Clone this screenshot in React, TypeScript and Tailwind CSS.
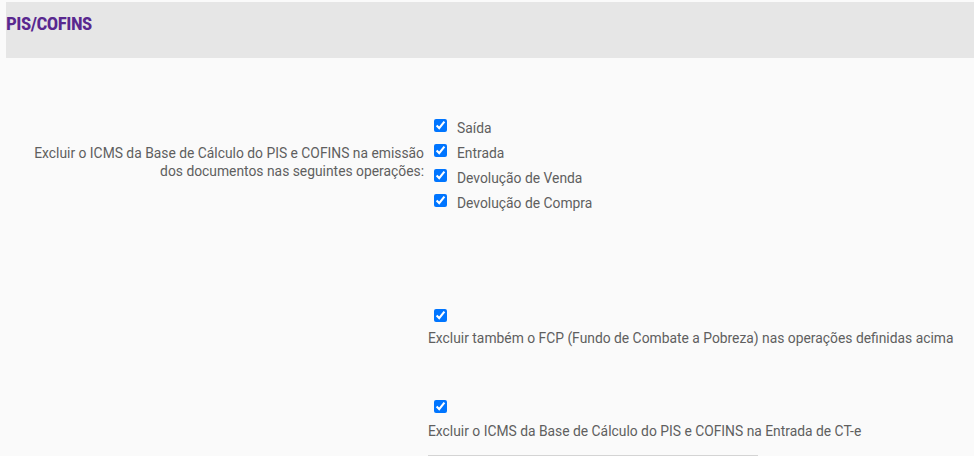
const ops = ["Saída", "Entrada", "Devolução de Venda", "Devolução de Compra"];

export default function App() {
  return (
    <div
      className="min-h-[456px] bg-[#fafafa] pt-[2px] text-[13.85px] text-[#5f5f5f]"
      style={{ fontFamily: "Roboto, 'Noto Sans', sans-serif" }}
    >
      <header className="ml-[6px] h-[56px] bg-[#e6e6e6] pt-[10px]">
        <h1
          className="text-[19px] font-bold leading-[24px] tracking-[-0.5px] text-[#59288f]"
          style={{ fontStretch: "condensed" }}
        >
          PIS/COFINS
        </h1>
      </header>

      <div className="mt-[57px] flex">
        <div className="w-[428px] shrink-0 pr-[4px] pt-[29px] text-right leading-[18px]">
          Excluir o ICMS da Base de Cálculo do PIS e COFINS na emissão
          <br />
          dos documentos nas seguintes operações:
        </div>
        <div className="flex flex-col pl-[6px]">
          {ops.map((o) => (
            <label key={o} className="flex h-[25px] items-center gap-[10px]">
              <input type="checkbox" defaultChecked className="m-0 mb-[4px] h-[13px] w-[13px] accent-[#0075ff]" />
              <span className="leading-[18px]">{o}</span>
            </label>
          ))}
        </div>
      </div>

      <div className="ml-[428px] mt-[94px] flex flex-col">
        <input type="checkbox" defaultChecked className="m-0 ml-[6px] h-[13px] w-[13px] accent-[#0075ff]" />
        <span className="mt-[7px] leading-[18px]">
          Excluir também o FCP (Fundo de Combate a Pobreza) nas operações definidas acima
        </span>

        <input type="checkbox" defaultChecked className="m-0 ml-[6px] mt-[53px] h-[13px] w-[13px] accent-[#0075ff]" />
        <span className="mt-[9px] leading-[18px]">
          Excluir o ICMS da Base de Cálculo do PIS e COFINS na Entrada de CT-e
        </span>

        <div className="mt-[15px] h-[8px] w-[330px] border-t border-[#d4d4d4]" />
      </div>
    </div>
  );
}
